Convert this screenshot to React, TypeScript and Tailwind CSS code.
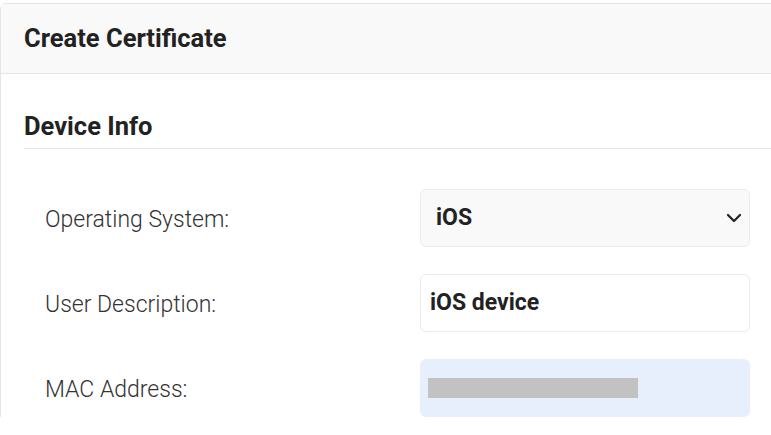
import { ChevronDown } from 'lucide-react';

const font = { fontFamily: 'Roboto, "Noto Sans", sans-serif' };

function Row({ label, children }: { label: string; children: React.ReactNode }) {
  return (
    <div className="flex h-[58px] items-center">
      <div className="w-[396px] shrink-0 pl-[21px] pt-[3px] text-[23px] font-light leading-[30px] text-[#333]">{label}</div>
      <div className="w-[330px] shrink-0">{children}</div>
    </div>
  );
}

export default function App() {
  return (
    <div className="h-[435px] w-[771px] overflow-hidden bg-white pt-[3px]" style={font}>
      <div className="w-[800px] rounded-tl-[6px] border-l border-t border-[#e6e6e6]">
        {/* header */}
        <div className="flex h-[70px] items-center border-b border-[#e6e6e6] bg-[#f9f9f9] pl-[23px]">
          <h1 className="text-[25.5px] font-bold leading-[33px] text-[#222]">Create Certificate</h1>
        </div>

        <div className="pl-[23px] pt-[36px]">
          <h2 className="text-[25.5px] font-bold leading-[33px] text-[#222]">Device Info</h2>
          <div className="mt-[5px] border-t border-[#e6e6e6]" />

          <div className="flex flex-col gap-[27px] pt-[40px]">
            <Row label="Operating System:">
              <div className="flex h-[58px] items-center justify-between rounded-[6px] border border-[#ebebeb] bg-[#f9f9f9] pl-[15px] pr-[3px]">
                <span className="text-[23px] font-bold leading-[30px] text-[#222]">iOS</span>
                <ChevronDown size={24} strokeWidth={2.2} className="text-[#222]" />
              </div>
            </Row>
            <Row label="User Description:">
              <div className="flex h-[58px] items-center rounded-[6px] border border-[#ebebeb] bg-white pl-[9px]">
                <span className="text-[23px] font-bold leading-[30px] text-[#222]">iOS device</span>
              </div>
            </Row>
            <Row label="MAC Address:">
              <div className="flex h-[58px] items-center rounded-[6px] bg-[#e8effc] pl-[8px]">
                <div className="h-[20px] w-[210px] bg-[#c2c2c2]" />
              </div>
            </Row>
          </div>
        </div>
      </div>
    </div>
  );
}
